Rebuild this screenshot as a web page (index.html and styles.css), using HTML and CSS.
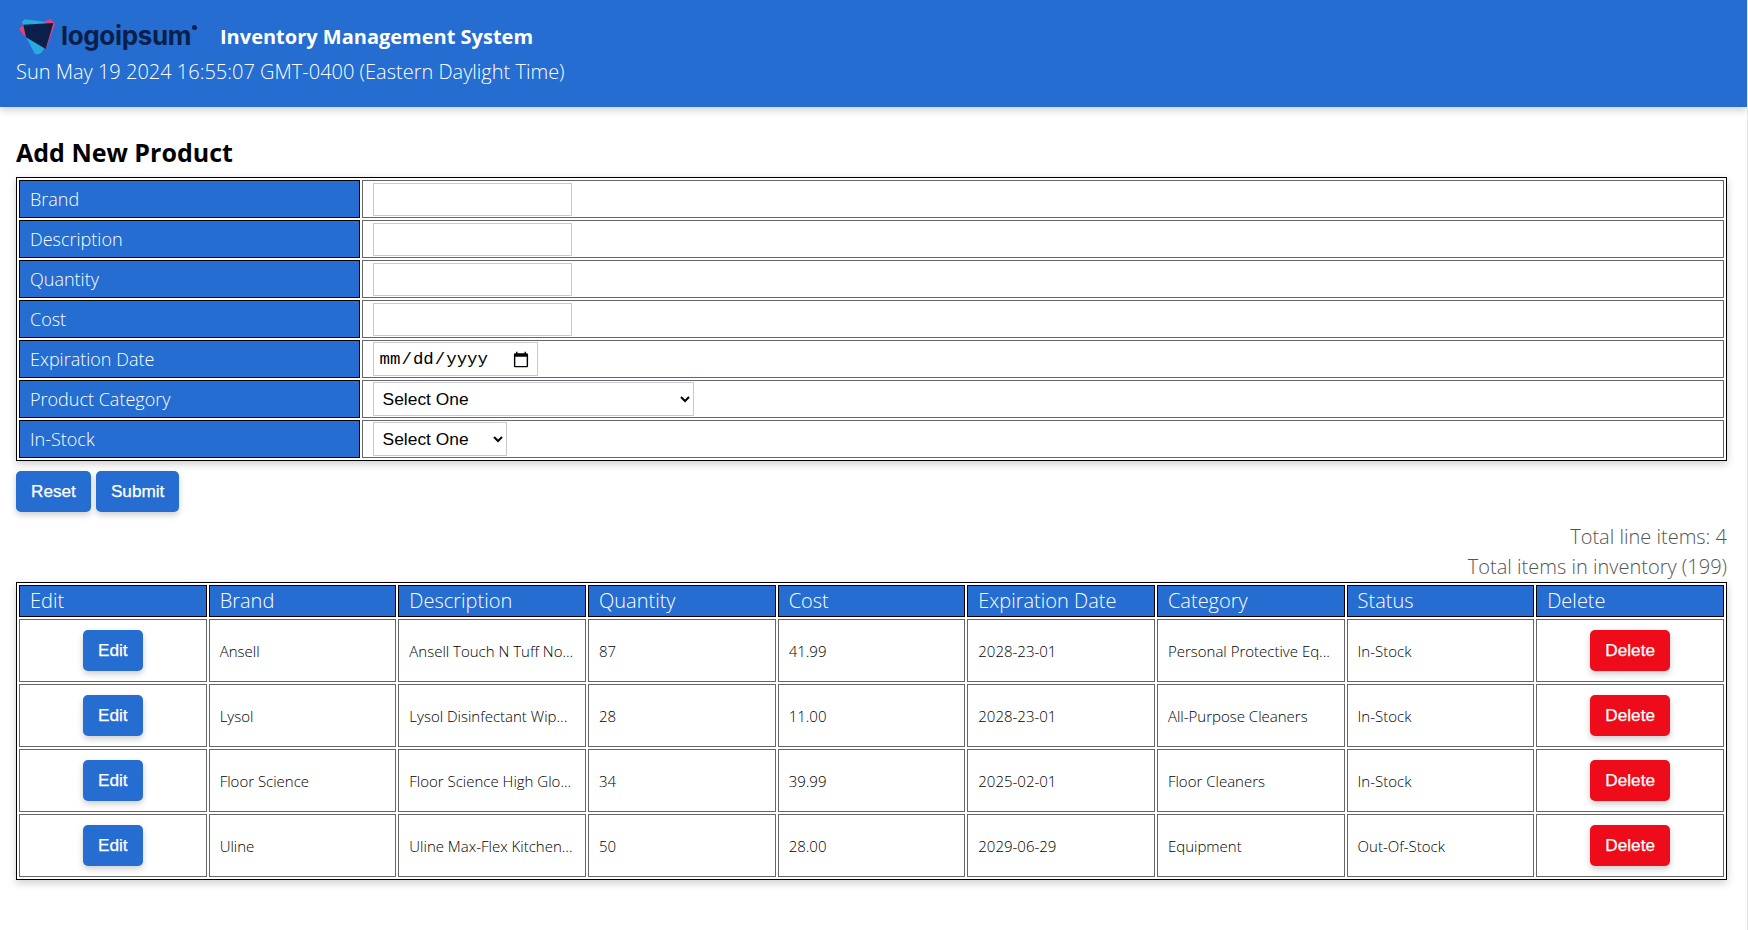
FILE: index.html
```html
<!DOCTYPE html>
<html lang="en">
<head>
  <meta charset="UTF-8">
  <meta name="viewport" content="width=device-width, initial-scale=1.0">
  <title>Inventory Management System</title>
  <link rel="stylesheet" href="styles.css">
</head>
<body>
  <header class="top-bar">
    <div class="brand-row">
      <div class="logo">
        <svg class="logo-mark" width="40" height="40" viewBox="0 0 40 40" aria-hidden="true">
          <path d="M5 4.5 L8 2.3 L30 5 L30 28 L24 36 L21 37.5 L18 37 L9 20 Z" fill="#2aa9dc"/>
          <path d="M2 12 L6.5 7.5 L9 20.5 L5.7 17 Z" fill="#e83e78"/>
          <path d="M28 4.3 L33.7 2 L38 7 L29 32 L26 20 Z" fill="#e83e78"/>
          <path d="M6.3 7.7 L36.3 6 L28.7 32 L9 20.3 Z" fill="#0b1f4b"/>
        </svg>
        <span class="logo-text">logoipsum</span><span class="logo-dot"></span>
      </div>
      <span class="app-title">Inventory Management System</span>
    </div>
    <div class="clock">Sun May 19 2024 16:55:07 GMT-0400 (Eastern Daylight Time)</div>
  </header>

  <main class="content">
    <h2 class="section-title">Add New Product</h2>
    <table class="data-table form-table">
      <tr>
        <th>Brand</th>
        <td><input type="text" class="field"></td>
      </tr>
      <tr>
        <th>Description</th>
        <td><input type="text" class="field"></td>
      </tr>
      <tr>
        <th>Quantity</th>
        <td><input type="text" class="field"></td>
      </tr>
      <tr>
        <th>Cost</th>
        <td><input type="text" class="field"></td>
      </tr>
      <tr>
        <th>Expiration Date</th>
        <td><input type="date" class="field date-field"></td>
      </tr>
      <tr>
        <th>Product Category</th>
        <td>
          <select class="field category-select">
            <option>Select One</option>
          </select>
        </td>
      </tr>
      <tr>
        <th>In-Stock</th>
        <td>
          <select class="field stock-select">
            <option>Select One</option>
          </select>
        </td>
      </tr>
    </table>

    <div class="form-actions">
      <button class="btn">Reset</button>
      <button class="btn">Submit</button>
    </div>

    <div class="totals">
      <div>Total line items: 4</div>
      <div>Total items in inventory (199)</div>
    </div>

    <table class="data-table inventory-table">
      <thead>
        <tr>
          <th>Edit</th>
          <th>Brand</th>
          <th>Description</th>
          <th>Quantity</th>
          <th>Cost</th>
          <th>Expiration Date</th>
          <th>Category</th>
          <th>Status</th>
          <th>Delete</th>
        </tr>
      </thead>
      <tbody>
        <tr>
          <td class="action"><button class="btn">Edit</button></td>
          <td>Ansell</td>
          <td>Ansell Touch N Tuff No...</td>
          <td>87</td>
          <td>41.99</td>
          <td>2028-23-01</td>
          <td>Personal Protective Eq...</td>
          <td>In-Stock</td>
          <td class="action"><button class="btn btn-danger">Delete</button></td>
        </tr>
        <tr>
          <td class="action"><button class="btn">Edit</button></td>
          <td>Lysol</td>
          <td>Lysol Disinfectant Wip...</td>
          <td>28</td>
          <td>11.00</td>
          <td>2028-23-01</td>
          <td>All-Purpose Cleaners</td>
          <td>In-Stock</td>
          <td class="action"><button class="btn btn-danger">Delete</button></td>
        </tr>
        <tr>
          <td class="action"><button class="btn">Edit</button></td>
          <td>Floor Science</td>
          <td>Floor Science High Glo...</td>
          <td>34</td>
          <td>39.99</td>
          <td>2025-02-01</td>
          <td>Floor Cleaners</td>
          <td>In-Stock</td>
          <td class="action"><button class="btn btn-danger">Delete</button></td>
        </tr>
        <tr>
          <td class="action"><button class="btn">Edit</button></td>
          <td>Uline</td>
          <td>Uline Max-Flex Kitchen...</td>
          <td>50</td>
          <td>28.00</td>
          <td>2029-06-29</td>
          <td>Equipment</td>
          <td>Out-Of-Stock</td>
          <td class="action"><button class="btn btn-danger">Delete</button></td>
        </tr>
      </tbody>
    </table>
  </main>
</body>
</html>
```

FILE: styles.css
```css
html {
  overflow: hidden;
  background-color: #e6e6e6;
}

body {
  font-family: "Open Sans", sans-serif;
  font-weight: 300;
  color: #000;
  margin: 0 1px 0 0;
  min-height: 930px;
  background-color: #fff;
}

.top-bar {
  height: 107px;
  box-sizing: border-box;
  padding: 16px 16px 0;
  background-color: #256dd0;
  color: #fff;
  box-shadow: 0 3px 8px rgba(0, 0, 0, 0.2);
}

.brand-row {
  display: flex;
  align-items: center;
  height: 40px;
}

.logo {
  display: flex;
  align-items: center;
  width: 200px;
  color: #0b1f4b;
  flex-shrink: 0;
}

.logo-mark {
  margin: 2px 0 0 1px;
  flex-shrink: 0;
}

.logo-text {
  font-family: Inter, sans-serif;
  font-weight: 700;
  font-size: 26px;
  letter-spacing: -0.35px;
  margin: -2px 0 0 4px;
}

.logo-dot {
  width: 5px;
  height: 5px;
  border-radius: 50%;
  background-color: #0b1f4b;
  margin: 0 0 18px 1px;
}

.app-title {
  font-weight: 700;
  font-size: 20px;
  margin-left: 4px;
}

.clock {
  font-size: 20px;
  font-weight: 300;
  line-height: 28px;
  margin-top: 2px;
}

.content {
  padding: 27px 20px 0 16px;
}

.section-title {
  font-size: 25px;
  font-weight: 700;
  line-height: 36px;
  margin: 0 0 7px;
}

.data-table {
  width: 100%;
  box-sizing: border-box;
  border: 1px solid #000;
  border-spacing: 2px;
  box-shadow: 0 3px 8px rgba(0, 0, 0, 0.2);
}

.data-table th {
  background-color: #256dd0;
  border: 1px solid #000;
  color: #fff;
  font-weight: 300;
  text-align: left;
  padding: 0 10px;
}

.data-table td {
  border: 1px solid #666;
  padding: 0 10px;
}

.form-table th {
  width: 20%;
  height: 36px;
  font-size: 18px;
}

.form-table td {
  height: 36px;
}

.field {
  display: block;
  box-sizing: border-box;
  height: 34px;
  border: 1px solid #c6cad6;
  background-color: #fff;
  font-size: 17.4px;
  padding: 0 5px;
}

input[type="text"].field {
  width: 199px;
  height: 33px;
  margin-top: 1px;
}

.date-field {
  width: 165px;
  padding: 2px 5px 0;
  font-family: "Liberation Mono", monospace;
}

.category-select,
.stock-select {
  font-family: "Liberation Sans", sans-serif;
  font-weight: 400;
  color: #000;
}

.category-select {
  width: 321px;
}

.stock-select {
  width: 134px;
}

.form-actions {
  display: flex;
  gap: 5px;
  margin-top: 10px;
}

.btn {
  height: 41px;
  padding: 0 15px;
  border: none;
  border-radius: 5px;
  background-color: #256dd0;
  color: #fff;
  font-family: "Liberation Sans", sans-serif;
  font-size: 17.2px;
  font-weight: 400;
  -webkit-text-stroke: 0.25px #fff;
  box-shadow: 0 3px 6px rgba(0, 0, 0, 0.2);
}

.btn-danger {
  background-color: #ee0c1b;
}

.totals {
  margin-top: 10px;
  text-align: right;
  font-size: 20px;
  line-height: 30px;
  color: #555;
}

.inventory-table {
  table-layout: fixed;
}

.inventory-table th {
  height: 32px;
  padding-bottom: 2px;
  box-sizing: border-box;
  font-size: 20px;
}

.inventory-table td {
  height: 61px;
  font-size: 15px;
  font-weight: 300;
  white-space: nowrap;
}

.inventory-table td.action {
  text-align: center;
}
```
